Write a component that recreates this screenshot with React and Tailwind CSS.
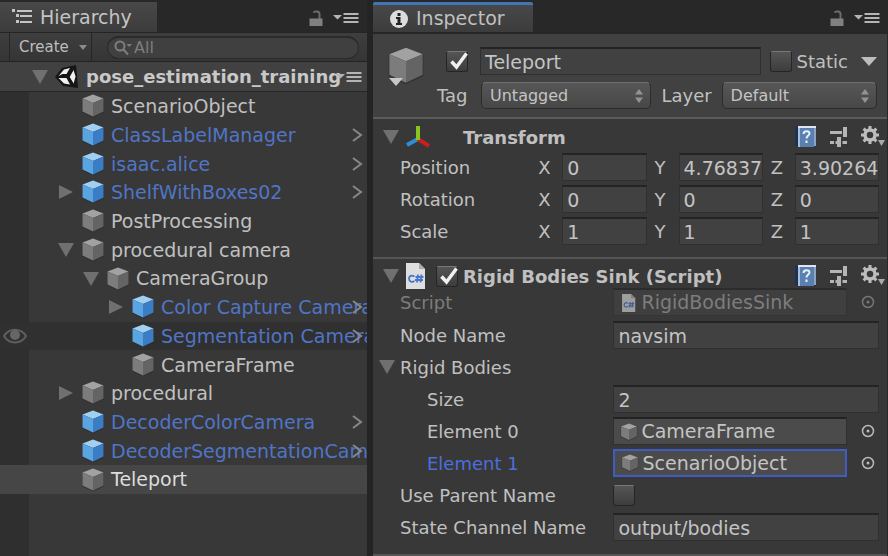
import React from 'react';

const ROWS = [
  { name: 'ScenarioObject', depth: 0 },
  { name: 'ClassLabelManager', depth: 0, prefab: true, chevron: true },
  { name: 'isaac.alice', depth: 0, prefab: true, chevron: true },
  { name: 'ShelfWithBoxes02', depth: 0, prefab: true, chevron: true, arrow: 'right' },
  { name: 'PostProcessing', depth: 0 },
  { name: 'procedural camera', depth: 0, arrow: 'down' },
  { name: 'CameraGroup', depth: 1, arrow: 'down' },
  { name: 'Color Capture Camera', depth: 2, prefab: true, chevron: true, arrow: 'right' },
  { name: 'Segmentation Camera', depth: 2, prefab: true, chevron: true, hover: true },
  { name: 'CameraFrame', depth: 2 },
  { name: 'procedural', depth: 0, arrow: 'right' },
  { name: 'DecoderColorCamera', depth: 0, prefab: true, chevron: true },
  { name: 'DecoderSegmentationCamera', depth: 0, prefab: true, chevron: true },
  { name: 'Teleport', depth: 0, selected: true },
];

const INDENT = ['pl-[55px]', 'pl-[80px]', 'pl-[105px]'];

function Triangle({ dir = 'down', className = 'text-[#707070]' }) {
  return (
    <svg viewBox="0 0 16 14" className={`h-[14px] w-4 shrink-0 ${className}`} fill="currentColor" aria-hidden="true">
      {dir === 'down' ? <path d="M0 0h16L8 14z" /> : <path d="M1 0v14L15 7z" />}
    </svg>
  );
}

function Cube({ prefab, className = 'h-6 w-6' }) {
  const [top, left, right] = prefab ? ['#a0cff2', '#5ba4e2', '#3a7dc4'] : ['#a2a2a2', '#7c7c7c', '#646464'];
  return (
    <svg viewBox="0 0 24 24" className={`shrink-0 ${className}`} aria-hidden="true">
      <path d="M12 1l11 4v13.500L12 23.500 1 18.500V5z" fill="#2b2b2b" opacity=".6" />
      <path d="M12 .5L22.500 4.500 12 9 1.500 4.500z" fill={top} />
      <path d="M1.500 4.500L12 9v13.500L1.500 17.500z" fill={left} />
      <path d="M22.500 4.500L12 9v13.500l10.500-5z" fill={right} />
    </svg>
  );
}

function LockIcon() {
  return (
    <svg viewBox="0 0 14 17" className="h-[17px] w-[14px]" aria-hidden="true">
      <path d="M4.500 2.500c1-1.500 6-1.800 6 1.500v5" fill="none" stroke="#6c6c6c" strokeWidth="2" />
      <path d="M.5 8.500h13V16H.5z" fill="#808080" />
    </svg>
  );
}

function MenuIcon() {
  return (
    <svg viewBox="0 0 26 12" className="h-3 w-[26px]" fill="#b4b4b4" aria-hidden="true">
      <path d="M0 3h9L4.500 7.500zM10.500 1h15v2h-15zM10.500 5h15v2h-15zM10.500 9h15v2h-15z" />
    </svg>
  );
}

function TabActions() {
  return (
    <div className="mt-1 ml-auto flex items-center gap-[10px]">
      <button aria-label="Lock"><LockIcon /></button>
      <button aria-label="Panel menu"><MenuIcon /></button>
    </div>
  );
}

function UnityLogo() {
  return (
    <svg viewBox="0 0 24 24" className="mx-[7px] h-6 w-6 shrink-0" aria-hidden="true">
      <path d="M0 12L7 3l14-3 1 10 1 13-15-2z" fill="#161616" />
      <path d="M3.500 11L9 4.500l6-1.500-3.500 6H7.500z" fill="#f2f2f2" />
      <path d="M3.500 13h4l4 0 3.500 6.500-6-1z" fill="#f2f2f2" />
      <path d="M18 3.500l2.500 8-2 7.500-4-7z" fill="#f2f2f2" />
      <path d="M5 12h8.500M13.500 12l5-8.500M13.500 12l5 8" fill="none" stroke="#161616" strokeWidth="1.800" />
    </svg>
  );
}

function Hierarchy() {
  return (
    <section className="flex min-w-0 flex-col bg-[#383838]">
      <header className="flex h-8 items-center bg-[#282828] pr-[8px]">
        <button className="mt-[2px] flex h-[30px] w-[157px] items-center gap-2 bg-linear-to-b from-[#484848] to-[#3c3c3c] pl-3 text-[19px] text-[#c4c4c4]">
          <svg viewBox="0 0 20 16" className="h-4 w-5" fill="#c4c4c4" aria-hidden="true">
            <path d="M0 0h3v3H0zM5 1h15v2H5zM4 5h3v3H4zM8 6h12v2H8zM4 11h3v3H4zM8 12h12v2H8z" />
          </svg>
          Hierarchy
        </button>
        <TabActions />
      </header>
      <div className="flex h-[30px] items-center border-y border-[#242424] bg-linear-to-b from-[#3e3e3e] to-[#353535] pr-2 pl-[9px]">
        <button className="flex h-full w-[83px] items-center gap-[10px] border-x border-[#262626] pl-[9px] text-[15px] text-[#bdbdbd]">
          Create
          <svg viewBox="0 0 8 5" className="h-[5px] w-2" fill="#8c8c8c" aria-hidden="true"><path d="M0 0h8L4 5z" /></svg>
        </button>
        <label className="ml-[15px] flex h-[23px] flex-1 items-center gap-[2px] rounded-full border border-t-2 border-[#2a2a2a] bg-[#404040] pl-[6px]">
          <svg viewBox="0 0 18 16" className="h-4 w-[18px] shrink-0" fill="none" stroke="#7d7d7d" strokeWidth="2" aria-hidden="true">
            <circle cx="6" cy="6" r="4.500" /><path d="M9 9l5 5.500" />
            <path d="M12.500 4h5.500l-2.800 3z" fill="#7d7d7d" stroke="none" />
          </svg>
          <input type="text" placeholder="All" aria-label="Search hierarchy" className="w-full min-w-0 bg-transparent text-[16px] leading-5 outline-none placeholder:text-[#7d7d7d]" />
        </label>
      </div>
      <div className="flex h-[30px] items-center border-b border-[#262626] bg-[#414141] pr-[5px] pl-8 text-[18px] font-bold text-[#c9c9c9]">
        <button aria-label="Collapse scene"><Triangle /></button>
        <UnityLogo />
        <span className="min-w-0 flex-1 whitespace-nowrap">pose_estimation_training</span>
        <button aria-label="Scene menu" className="shrink-0"><MenuIcon /></button>
      </div>
      <ul className="grid h-[402px] auto-rows-fr bg-linear-to-r from-[#2f2f2f] from-[29px] to-[#383838] to-[29px] text-[19px]">
        {ROWS.map((r) => (
          <li
            key={r.name}
            className={`relative flex min-w-0 items-center overflow-hidden ${INDENT[r.depth]} ${r.selected ? 'bg-[#464646]' : ''} ${r.hover ? 'bg-[#303030]' : ''}`}
          >
            {r.hover && (
              <svg viewBox="0 0 24 16" className="absolute left-[3px] h-4 w-6" aria-hidden="true">
                <path d="M1 8c5-8.500 17-8.500 22 0-5 8.500-17 8.500-22 0z" fill="none" stroke="#5e5e5e" strokeWidth="2" />
                <circle cx="12" cy="7" r="5" fill="#666" />
              </svg>
            )}
            <span className="flex w-[26px] shrink-0 pl-[3px]">{r.arrow && <button aria-label={`Toggle ${r.name}`}><Triangle dir={r.arrow} /></button>}</span>
            <button className={`flex items-center gap-[6px] whitespace-nowrap ${r.prefab ? 'text-[#5075c6]' : r.selected ? 'text-[#dcdcdc]' : 'text-[#c0c0c0]'}`}>
              <Cube prefab={r.prefab} />
              {r.name}
            </button>
            {r.chevron && (
              <svg viewBox="0 0 12 14" className="absolute right-1 h-[14px] w-3" fill="none" stroke="#888" strokeWidth="2" aria-hidden="true">
                <path d="M2 1l8 6-8 6" />
              </svg>
            )}
          </li>
        ))}
      </ul>
      <div className="flex-1 bg-linear-to-r from-[#2f2f2f] from-[29px] to-[#383838] to-[29px]" />
    </section>
  );
}

function Check({ label, checked, children }) {
  return (
    <label className="flex shrink-0 items-center gap-[5px]">
      <span className="relative flex h-[21px] w-[22px]">
        <input
          type="checkbox"
          aria-label={label}
          defaultChecked={checked}
          className="peer h-full w-full appearance-none rounded-[3px] border border-[#252525] border-t-[#777] bg-linear-to-b from-[#555] to-[#3d3d3d]"
        />
        <svg viewBox="0 0 22 21" className="pointer-events-none absolute inset-0 hidden h-full w-full peer-checked:block" fill="none" stroke="#f0f0f0" strokeWidth="3.500" aria-hidden="true">
          <path d="M5.500 10.500l5 5.500L20.500 2.500" />
        </svg>
      </span>
      {children}
    </label>
  );
}

const FIELD = 'h-7 w-full min-w-0 border border-t-2 border-[#303030] border-t-[#232323] bg-[#414141] pl-1 text-[19px] leading-6 text-[#c4c4c4] outline-none';

function Popup({ label, value, className }) {
  return (
    <div className={`relative flex min-w-0 ${className}`}>
      <select aria-label={label} defaultValue={value} className="h-[27px] w-full appearance-none rounded-[5px] border border-[#2c2c2c] border-t-[#707070] bg-linear-to-b from-[#575757] to-[#474747] pl-2 text-[16px] text-[#c4c4c4]">
        <option>{value}</option>
      </select>
      <svg viewBox="0 0 8 14" className="pointer-events-none absolute top-[7px] right-2 h-[14px] w-2" fill="#939393" aria-hidden="true">
        <path d="M0 5.500h8L4 0zM0 8.500h8L4 14z" />
      </svg>
    </div>
  );
}

function ComponentTools() {
  return (
    <div className="mr-[2px] ml-auto flex items-center gap-3">
      <button aria-label="Help">
        <svg viewBox="0 0 22 24" className="h-6 w-[22px]" aria-hidden="true">
          <path d="M0 2l2-1h19v21H2l-2-2z" fill="#1c3353" />
          <path d="M3 1h18v18H3z" fill="#dfe6f0" />
          <path d="M19 3h2v18h-2z" fill="#8fa3c0" />
          <path d="M4 3h15v19H4z" fill="#5a80b2" />
          <path d="M3 3h2v19H3z" fill="#a8c0de" />
          <path d="M8.500 9c0-4 6-3.500 6-.5 0 2-3 2-3 5M11.500 15.500v2.500" fill="none" stroke="#e8eef6" strokeWidth="2" />
        </svg>
      </button>
      <button aria-label="Presets">
        <svg viewBox="0 0 20 22" className="h-[22px] w-5" fill="#b5b5b5" aria-hidden="true">
          <path d="M1 5h12v3H1zM14 1h4v10h-4zM1 15h4v3H1zM6.500 15h1.500v-4h4v10H8v-3H6.500zM13.500 15H18v3h-4.500z" />
        </svg>
      </button>
      <button aria-label="Settings">
        <svg viewBox="0 0 24 22" className="h-[22px] w-6" aria-hidden="true">
          <circle cx="9" cy="9" r="5" fill="none" stroke="#bdbdbd" strokeWidth="3.500" />
          <path d="M9 0v4M9 14v4M0 9h4M14 9h4M2.600 2.600l2.900 2.900M12.500 12.500l2.900 2.900M2.600 15.400l2.900-2.900M12.500 5.500l2.900-2.900" stroke="#bdbdbd" strokeWidth="3" />
          <path d="M17 14h7l-3.500 6z" fill="#aaa" />
        </svg>
      </button>
    </div>
  );
}

function ScriptFile({ className }) {
  return (
    <svg viewBox="0 0 20 26" className={`shrink-0 ${className}`} aria-hidden="true">
      <path d="M0 0h13l6 6v20H0z" fill="#dcdfdd" />
      <path d="M13 0v6h6z" fill="#a9adab" />
      <path d="M8.500 13.500c-3-2-5.500-.5-5.500 2s2.500 4.500 5.500 2.500M12 11.500l-1 8M15.500 11.500l-1 8M9.500 14h8M9 17h8" fill="none" stroke="#4a74cf" strokeWidth="1.800" />
    </svg>
  );
}

function Target({ dim }) {
  return (
    <button aria-label="Select object" className="ml-auto pr-1">
      <svg viewBox="0 0 14 14" className={`h-[14px] w-[14px] ${dim ? 'text-[#777]' : 'text-[#bbb]'}`} aria-hidden="true">
        <circle cx="7" cy="7" r="5.500" fill="none" stroke="currentColor" strokeWidth="1.500" />
        <circle cx="7" cy="7" r="1.500" fill="currentColor" />
      </svg>
    </button>
  );
}

function ObjectField({ icon, children, dim, focused }) {
  return (
    <div className="flex items-center">
      <button
        disabled={dim}
        className={`mr-[14px] flex h-7 min-w-0 flex-1 items-center gap-[2px] pl-[5px] text-left text-[19px] ${
          focused
            ? 'border-2 border-[#3f5bc4] bg-[#4b4b4b] text-[#c4c4c4]'
            : dim
              ? 'border border-t-2 border-[#343434] border-t-[#2c2c2c] bg-[#3f3f3f] text-[#7d7d7d]'
              : 'border border-t-2 border-[#303030] border-t-[#232323] bg-[#4b4b4b] text-[#c4c4c4]'
        }`}
      >
        {icon}
        <span className="whitespace-nowrap">{children}</span>
      </button>
      <Target dim={dim} />
    </div>
  );
}

function Property({ label, id, indent, active, dim, children }) {
  return (
    <div className={`grid grid-cols-[213fr_265fr] items-center ${dim ? 'h-7' : 'h-8'}`}>
      <label htmlFor={id} className={`whitespace-nowrap ${indent ? 'pl-[27px]' : ''} ${active ? 'text-[#4a6fdd]' : dim ? 'text-[#7d7d7d]' : ''}`}>{label}</label>
      {children}
    </div>
  );
}

function Vector({ label, values }) {
  return (
    <div className="grid h-8 grid-cols-[138fr_340fr] items-center">
      <span>{label}</span>
      <div className="grid min-w-0 grid-cols-3 gap-2">
        {['X', 'Y', 'Z'].map((axis, i) => (
          <label key={axis} className="flex min-w-0 items-center">
            <span className="w-6 shrink-0">{axis}</span>
            <input type="text" defaultValue={values[i]} className={FIELD} />
          </label>
        ))}
      </div>
    </div>
  );
}

function Inspector() {
  return (
    <section className="flex min-w-0 flex-col border-r border-[#282828] bg-[#383838] text-[18px] text-[#c0c0c0]">
      <header className="flex h-8 items-center bg-[#282828] pr-[7px]">
        <button className="mt-[2px] flex h-[30px] w-[160px] items-center gap-2 rounded-t-[2px] border-t-[3px] border-[#3f76b5] bg-linear-to-b from-[#484848] to-[#3c3c3c] pl-[17px] text-[19px]">
          <svg viewBox="0 0 18 18" className="h-[18px] w-[18px]" aria-hidden="true">
            <circle cx="9" cy="9" r="9" fill="#dcdcdc" />
            <path d="M7.500 3h3v3h-3zM6 7h4.500v6H12v2H6v-2h1.500V9H6z" fill="#222" />
          </svg>
          Inspector
        </button>
        <TabActions />
      </header>
      <div className="flex h-[87px] items-start border-y-2 border-t-[#262626] border-b-[#5c5c5c] bg-[#414141] pt-[13px] pr-[10px] pl-[14px]">
        <div className="relative flex h-[42px] w-[37px]">
          <Cube className="h-[38px] w-[38px]" />
          <svg viewBox="0 0 14 8" className="absolute bottom-[3px] left-[2px] h-2 w-[14px]" fill="#c8c8c8" aria-hidden="true"><path d="M0 0h14L7 8z" /></svg>
        </div>
        <div className="flex min-w-0 flex-1 flex-col gap-[7px] pl-[13px]">
          <div className="flex items-center pl-[9px]">
            <Check label="Active" checked />
            <div className="ml-3 flex min-w-0 flex-1"><input type="text" aria-label="Object name" defaultValue="Teleport" className={FIELD} /></div>
            <div className="ml-[9px] flex items-center">
              <Check>Static</Check>
              <button aria-label="Static options" className="ml-[13px]">
                <svg viewBox="0 0 16 9" className="h-[9px] w-4" fill="#bdbdbd" aria-hidden="true"><path d="M0 0h16L8 9z" /></svg>
              </button>
            </div>
          </div>
          <div className="flex items-center">
            <span className="mr-[10px] w-[34px] shrink-0">Tag</span>
            <Popup label="Tag" value="Untagged" className="flex-[170]" />
            <span className="mx-[10px] shrink-0">Layer</span>
            <Popup label="Layer" value="Default" className="flex-[155]" />
          </div>
        </div>
      </div>
      <div className="border-b-2 border-[#555] pr-2 pb-[10px] pl-[27px]">
        <div className="-mr-2 -ml-[17px] flex h-8 items-center pt-1">
          <Triangle />
          <svg viewBox="0 0 26 24" className="ml-[7px] h-6 w-[26px]" fill="none" strokeWidth="4" aria-hidden="true">
            <path d="M12 14L1 20" stroke="#2f8fd6" /><path d="M12 14l11 7" stroke="#c8201c" /><path d="M12 15V1" stroke="#8cc21c" />
          </svg>
          <h2 className="ml-[31px] font-bold">Transform</h2>
          <ComponentTools />
        </div>
        <Vector label="Position" values={['0', '4.76837', '3.90264']} />
        <Vector label="Rotation" values={['0', '0', '0']} />
        <Vector label="Scale" values={['1', '1', '1']} />
      </div>
      <div className="border-b-2 border-[#555] pr-2 pb-[11px] pl-[27px]">
        <div className="-mr-2 -ml-[17px] flex h-[29px] items-center pt-[5px]">
          <Triangle />
          <ScriptFile className="mr-[10px] ml-[7px] h-[26px] w-5" />
          <Check label="Enabled" checked />
          <h2 className="ml-[5px] font-bold whitespace-nowrap">Rigid Bodies Sink (Script)</h2>
          <ComponentTools />
        </div>
        <div className="h-[31px]">
          <Property label="Script" dim>
            <ObjectField dim icon={<ScriptFile className="mx-[3px] h-[18px] w-[14px] opacity-60" />}>RigidBodiesSink</ObjectField>
          </Property>
        </div>
        <Property label="Node Name" id="node"><input id="node" type="text" defaultValue="navsim" className={FIELD} /></Property>
        <button className="-ml-[21px] flex h-8 items-center gap-[5px]"><Triangle />Rigid Bodies</button>
        <Property label="Size" id="size" indent><input id="size" type="text" defaultValue="2" className={FIELD} /></Property>
        <Property label="Element 0" indent><ObjectField icon={<Cube className="h-[18px] w-5" />}>CameraFrame</ObjectField></Property>
        <Property label="Element 1" indent active><ObjectField focused icon={<Cube className="h-[18px] w-5" />}>ScenarioObject</ObjectField></Property>
        <Property label="Use Parent Name"><Check label="Use Parent Name" /></Property>
        <Property label="State Channel Name" id="channel"><input id="channel" type="text" defaultValue="output/bodies" className={FIELD} /></Property>
      </div>
    </section>
  );
}

export default function App() {
  return (
    <main className="grid min-h-screen grid-cols-[367fr_6px_515fr] overflow-hidden bg-[#242424] font-['DejaVu_Sans',sans-serif]">
      <Hierarchy />
      <div />
      <Inspector />
    </main>
  );
}
